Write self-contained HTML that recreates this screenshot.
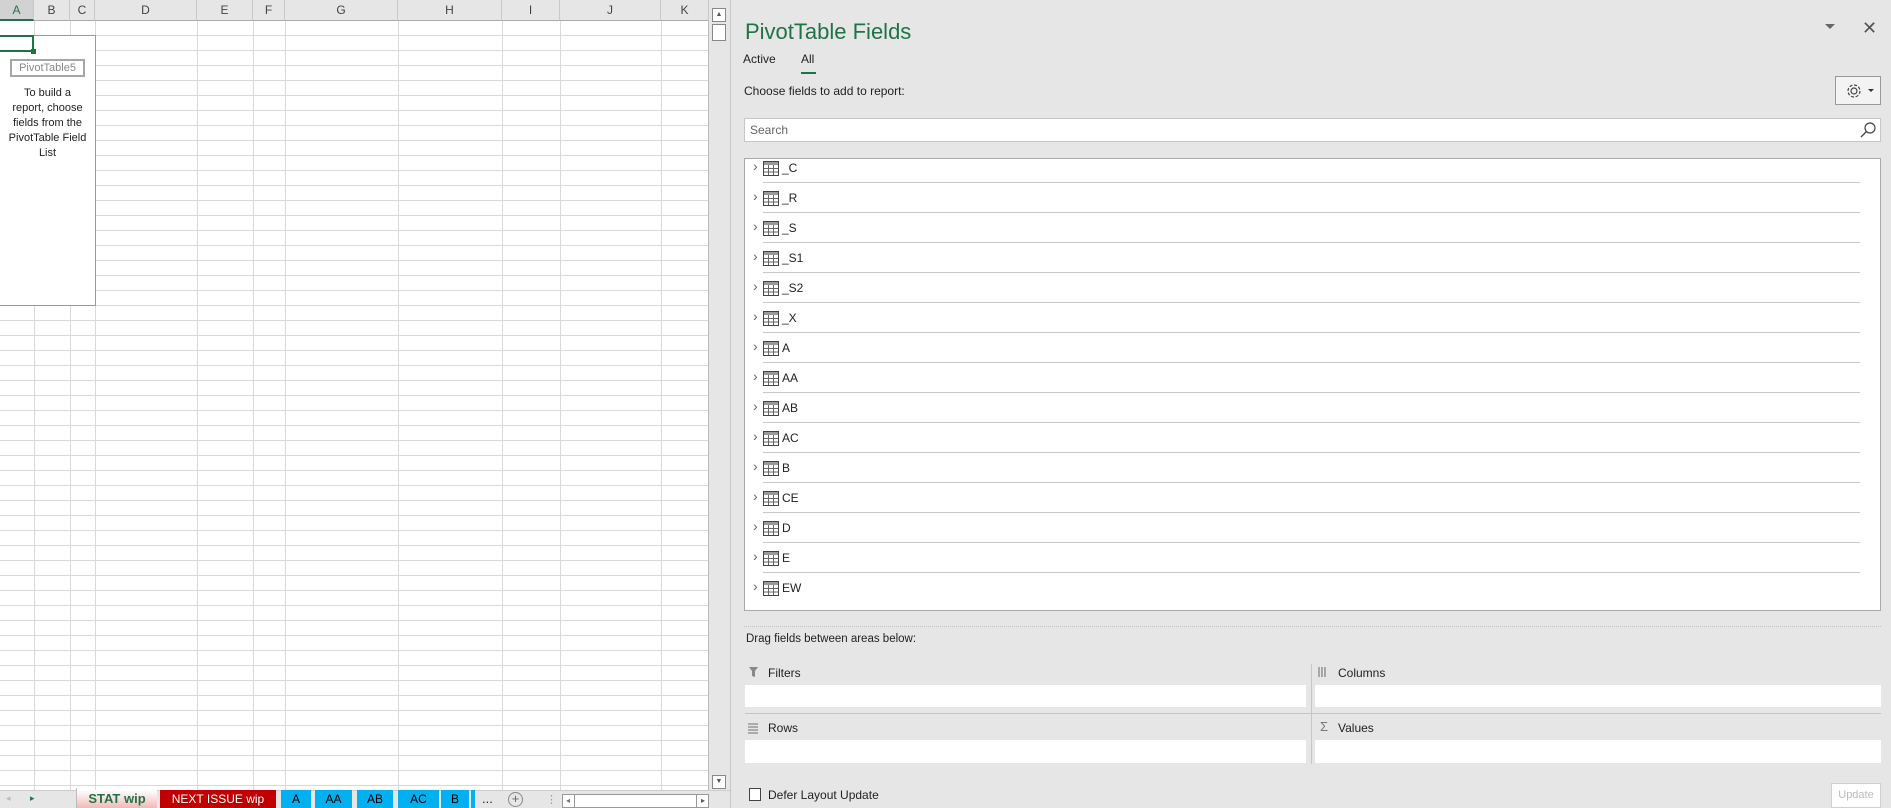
<!DOCTYPE html>
<html><head><meta charset="utf-8"><style>
*{margin:0;padding:0;box-sizing:border-box}
body{width:1891px;height:808px;overflow:hidden;background:#e6e6e6;font-family:"Liberation Sans",sans-serif;position:relative;color:#222}
.a{position:absolute}
#grid{left:0;top:21px;width:709px;height:769px;background-color:#fff;
background-image:repeating-linear-gradient(to bottom,transparent 0,transparent 14px,#d9d9d9 14px,#d9d9d9 15px);}
.vl{position:absolute;top:0;width:1px;height:790px;background:#d9d9d9}
.hdr{position:absolute;top:0;height:21px;background:#e6e6e6;border-right:1px solid #c8c8c8;border-bottom:1px solid #ababab;font-size:12px;text-align:center;line-height:21px;color:#444}
.row{position:absolute;left:745px;width:1136px;height:30px;font-size:12px}
.row .ch{position:absolute;left:8px;top:5px;font-size:14px;color:#666}
.tab{position:absolute;top:790px;height:18px;font-size:12px;text-align:center;line-height:18px;color:#000}
</style></head><body>
<div id="grid" class="a"></div>
<div class="vl" style="left:34px"></div><div class="vl" style="left:70px"></div><div class="vl" style="left:95px"></div><div class="vl" style="left:197px"></div><div class="vl" style="left:253px"></div><div class="vl" style="left:285px"></div><div class="vl" style="left:398px"></div><div class="vl" style="left:502px"></div><div class="vl" style="left:560px"></div><div class="vl" style="left:661px"></div><div class="vl" style="left:708px;background:#bbb"></div>
<div class="hdr" style="left:0;width:34px;background:#d2d2d2;border-bottom:2px solid #217346;color:#217346">A</div>
<div class="hdr" style="left:34px;width:36px">B</div>
<div class="hdr" style="left:70px;width:25px">C</div>
<div class="hdr" style="left:95px;width:102px">D</div>
<div class="hdr" style="left:197px;width:56px">E</div>
<div class="hdr" style="left:253px;width:32px">F</div>
<div class="hdr" style="left:285px;width:113px">G</div>
<div class="hdr" style="left:398px;width:104px">H</div>
<div class="hdr" style="left:502px;width:58px">I</div>
<div class="hdr" style="left:560px;width:101px">J</div>
<div class="hdr" style="left:661px;width:48px">K</div>
<div class="a" style="left:0;top:35px;width:96px;height:271px;background:#fff;border:1px solid #999;border-left:none"></div>
<div class="a" style="left:0;top:35px;width:34px;height:17px;border:2px solid #217346;border-left:none"></div>
<div class="a" style="left:31px;top:49px;width:5px;height:5px;background:#217346"></div>
<div class="a" style="left:10px;top:59px;width:75px;height:18px;border:2px solid #a6a6a6;font-size:11px;color:#888;text-align:center;line-height:14px">PivotTable5</div>
<div class="a" style="left:0;top:86px;width:95px;font-size:11px;line-height:15px;text-align:center;color:#222">To build a<br>report, choose<br>fields from the<br>PivotTable Field<br>List</div>
<div class="a" style="left:709px;top:0;width:21px;height:790px;background:#e6e6e6"></div>
<div class="a" style="left:712px;top:8px;width:14px;height:14px;border:1px solid #888;background:#fff;font-size:7px;text-align:center;line-height:12px;color:#555">▲</div>
<div class="a" style="left:712px;top:24px;width:14px;height:17px;border:1px solid #888;background:#fff"></div>
<div class="a" style="left:712px;top:775px;width:14px;height:14px;border:1px solid #888;background:#fff;font-size:7px;text-align:center;line-height:12px;color:#555">▼</div>
<div class="a" style="left:0;top:790px;width:730px;height:18px;background:#e6e6e6;border-top:1px solid #ccc"></div>
<div class="a" style="left:6px;top:793px;font-size:9px;color:#bbb">◂</div>
<div class="a" style="left:30px;top:793px;font-size:9px;color:#217346">▸</div>
<div class="a" style="left:76px;top:788px;width:1px;height:20px;background:#bbb"></div>
<div class="tab" style="left:77px;width:80px;background:linear-gradient(#fff,#f1b9b9);color:#217346;font-weight:bold;font-size:13px">STAT wip</div>
<div class="tab" style="left:160px;width:116px;background:#c00000;color:#fff">NEXT ISSUE wip</div>
<div class="tab" style="left:281px;width:30px;background:#00b0f0">A</div>
<div class="tab" style="left:315px;width:37px;background:#00b0f0">AA</div>
<div class="tab" style="left:357px;width:36px;background:#00b0f0">AB</div>
<div class="tab" style="left:398px;width:41px;background:#00b0f0">AC</div>
<div class="tab" style="left:441px;width:28px;background:#00b0f0">B</div>
<div class="tab" style="left:471px;width:4px;background:#00b0f0"></div>
<div class="a" style="left:482px;top:791px;font-size:13px">...</div>
<div class="a" style="left:508px;top:792px;width:15px;height:15px;border:1px solid #888;border-radius:50%;font-size:13px;line-height:12px;text-align:center;color:#666">+</div>
<div class="a" style="left:546px;top:793px;font-size:11px;color:#999">⋮</div>
<div class="a" style="left:562px;top:794px;width:147px;height:14px;border:1px solid #999;background:#fff"></div>
<div class="a" style="left:562px;top:794px;width:13px;height:14px;border-right:1px solid #999;font-size:8px;color:#777;text-align:center;line-height:13px">◂</div>
<div class="a" style="left:696px;top:794px;width:13px;height:14px;border-left:1px solid #999;font-size:8px;color:#555;text-align:center;line-height:13px">▸</div>
<div class="a" style="left:730px;top:0;width:1px;height:808px;background:#c6c6c6"></div>
<div class="a" style="left:745px;top:19px;font-size:22px;color:#217346">PivotTable Fields</div>
<div class="a" style="left:1825px;top:24px;width:0;height:0;border-left:5px solid transparent;border-right:5px solid transparent;border-top:5px solid #666"></div>
<div class="a" style="left:1862px;top:18px;font-size:18px;color:#555">✕</div>
<div class="a" style="left:743px;top:52px;font-size:12px">Active</div>
<div class="a" style="left:801px;top:52px;font-size:12px">All</div>
<div class="a" style="left:801px;top:72px;width:15px;height:2px;background:#217346"></div>
<div class="a" style="left:744px;top:84px;font-size:12px">Choose fields to add to report:</div>
<div class="a" style="left:1835px;top:76px;width:46px;height:29px;border:1px solid #999;background:#f3f3f3">
<svg width="46" height="29" style="position:absolute;left:0;top:0"><circle cx="18" cy="14" r="6" fill="none" stroke="#444" stroke-width="1.2" stroke-dasharray="3 1.7"/><circle cx="18" cy="14" r="3" fill="none" stroke="#444" stroke-width="1.2"/><path d="M32 12h6l-3 3z" fill="#333"/></svg></div>
<div class="a" style="left:744px;top:118px;width:1137px;height:24px;background:#fff;border:1px solid #c6c6c6;font-size:12px;color:#666;padding:4px 5px">Search
<svg width="16" height="18" style="position:absolute;right:4px;top:2px"><circle cx="10" cy="7" r="5" fill="none" stroke="#444" stroke-width="1.2"/><path d="M6.5 10.5L1 16" stroke="#444" stroke-width="1.3"/></svg></div>
<div class="a" style="left:744px;top:158px;width:1137px;height:453px;background:#fff;border:1px solid #aaa"></div>
<div id="list"></div>
<div class="a" style="left:744px;top:626px;width:1137px;height:1px;border-top:1px dotted #c4c4c4"></div>
<div class="a" style="left:746px;top:633px;font-size:11.5px">Drag fields between areas below:</div>
<div class="a" style="left:1311px;top:664px;width:1px;height:100px;background:#c6c6c6"></div>
<div class="a" style="left:745px;top:713px;width:1136px;height:1px;background:#c6c6c6"></div>
<svg class="a" style="left:748px;top:666px" width="12" height="12"><path d="M1 1h9l-3 4v6l-3-1V5z" fill="#888"/></svg>
<div class="a" style="left:768px;top:666px;font-size:12px">Filters</div>
<svg class="a" style="left:1318px;top:666px" width="12" height="12"><path d="M1 1v10M4 1v10M7 1v10" stroke="#888" stroke-width="1.3"/></svg>
<div class="a" style="left:1338px;top:666px;font-size:12px">Columns</div>
<svg class="a" style="left:748px;top:722px" width="12" height="12"><path d="M0 2h10M0 5h10M0 8h10M0 11h10" stroke="#888" stroke-width="1.2"/></svg>
<div class="a" style="left:768px;top:721px;font-size:12px">Rows</div>
<div class="a" style="left:1320px;top:719px;font-size:13px;color:#777">Σ</div>
<div class="a" style="left:1338px;top:721px;font-size:12px">Values</div>
<div class="a" style="left:745px;top:685px;width:561px;height:22px;background:#fff"></div>
<div class="a" style="left:1315px;top:685px;width:566px;height:22px;background:#fff"></div>
<div class="a" style="left:745px;top:740px;width:561px;height:23px;background:#fff"></div>
<div class="a" style="left:1315px;top:740px;width:566px;height:23px;background:#fff"></div>
<div class="a" style="left:749px;top:788px;width:12px;height:13px;border:1px solid #444;background:#fff"></div>
<div class="a" style="left:768px;top:788px;font-size:12px">Defer Layout Update</div>
<div class="a" style="left:1831px;top:783px;width:50px;height:25px;border:1px solid #d0d0d0;background:#fff;font-size:11px;color:#bbb;text-align:center;line-height:23px">Update</div>
<script>
var n=["_C","_R","_S","_S1","_S2","_X","A","AA","AB","AC","B","CE","D","E","EW"],h="";
n.forEach(function(t,i){var y=153+i*30;
h+='<div class="row" style="top:'+y+'px"><span class="ch">›</span>'+
'<svg style="position:absolute;left:18px;top:8px" width="17" height="16"><rect x="0.5" y="0.5" width="15" height="14" fill="#fff" stroke="#444"/><rect x="1" y="1" width="14" height="3" fill="#999"/><path d="M1 7.5h14M1 11h14M5.5 4v10M10.5 4v10" stroke="#666"/></svg>'+
'<span style="position:absolute;left:37px;top:8px">'+t+'</span>'+
(i<14?'<div style="position:absolute;left:18px;top:29px;width:1097px;height:1px;background:#c8c8c8"></div>':'')+'</div>';});
document.getElementById("list").innerHTML=h;
</script>
</body></html>
